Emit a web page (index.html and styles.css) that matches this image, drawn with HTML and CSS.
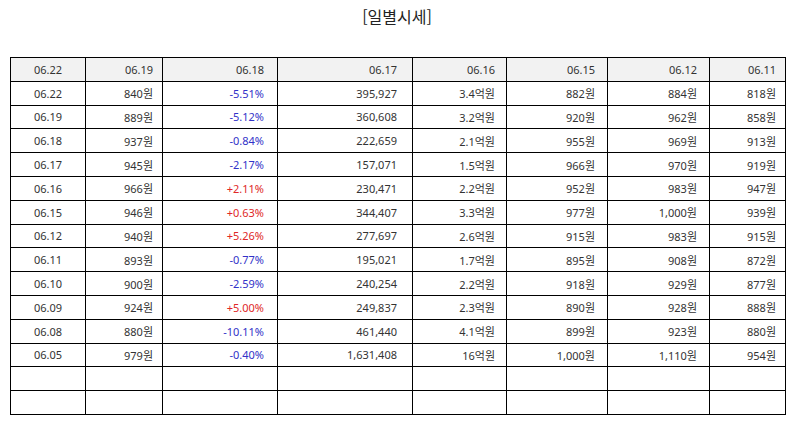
FILE: index.html
```html
<!DOCTYPE html>
<html lang="ko">
<head>
<meta charset="utf-8">
<title>일별시세</title>
<link rel="stylesheet" href="styles.css">
</head>
<body>
<div class="title">[일별시세]</div>
<table class="daily">
<colgroup>
<col class="c1"><col class="c2"><col class="c3"><col class="c4"><col class="c5"><col class="c6"><col class="c7"><col class="c8">
</colgroup>
<thead>
<tr><th>06.22</th><th>06.19</th><th>06.18</th><th>06.17</th><th>06.16</th><th>06.15</th><th>06.12</th><th>06.11</th></tr>
</thead>
<tbody>
<tr><td>06.22</td><td>840원</td><td class="dn">-5.51%</td><td>395,927</td><td>3.4억원</td><td>882원</td><td>884원</td><td>818원</td></tr>
<tr><td>06.19</td><td>889원</td><td class="dn">-5.12%</td><td>360,608</td><td>3.2억원</td><td>920원</td><td>962원</td><td>858원</td></tr>
<tr><td>06.18</td><td>937원</td><td class="dn">-0.84%</td><td>222,659</td><td>2.1억원</td><td>955원</td><td>969원</td><td>913원</td></tr>
<tr><td>06.17</td><td>945원</td><td class="dn">-2.17%</td><td>157,071</td><td>1.5억원</td><td>966원</td><td>970원</td><td>919원</td></tr>
<tr><td>06.16</td><td>966원</td><td class="up">+2.11%</td><td>230,471</td><td>2.2억원</td><td>952원</td><td>983원</td><td>947원</td></tr>
<tr><td>06.15</td><td>946원</td><td class="up">+0.63%</td><td>344,407</td><td>3.3억원</td><td>977원</td><td>1,000원</td><td>939원</td></tr>
<tr><td>06.12</td><td>940원</td><td class="up">+5.26%</td><td>277,697</td><td>2.6억원</td><td>915원</td><td>983원</td><td>915원</td></tr>
<tr><td>06.11</td><td>893원</td><td class="dn">-0.77%</td><td>195,021</td><td>1.7억원</td><td>895원</td><td>908원</td><td>872원</td></tr>
<tr><td>06.10</td><td>900원</td><td class="dn">-2.59%</td><td>240,254</td><td>2.2억원</td><td>918원</td><td>929원</td><td>877원</td></tr>
<tr><td>06.09</td><td>924원</td><td class="up">+5.00%</td><td>249,837</td><td>2.3억원</td><td>890원</td><td>928원</td><td>888원</td></tr>
<tr><td>06.08</td><td>880원</td><td class="dn">-10.11%</td><td>461,440</td><td>4.1억원</td><td>899원</td><td>923원</td><td>880원</td></tr>
<tr><td>06.05</td><td>979원</td><td class="dn">-0.40%</td><td>1,631,408</td><td>16억원</td><td>1,000원</td><td>1,110원</td><td>954원</td></tr>
<tr><td></td><td></td><td></td><td></td><td></td><td></td><td></td><td></td></tr>
<tr><td></td><td></td><td></td><td></td><td></td><td></td><td></td><td></td></tr>
</tbody>
</table>
</body>
</html>
```
FILE: styles.css
```css
html, body {
  margin: 0;
  padding: 0;
  background: #fff;
}
body {
  font-family: "Noto Sans", "Noto Sans CJK KR", sans-serif;
  color: #333;
}
.title {
  height: 57px;
  padding-top: 4px;
  box-sizing: border-box;
  text-align: center;
  font-family: "Noto Sans CJK KR", sans-serif;
  font-size: 16px;
  line-height: 24px;
  color: #222;
}
.daily {
  margin-left: 10px;
  border-collapse: collapse;
  table-layout: fixed;
  width: 776px;
  font-size: 11px;
}
.daily .c1 { width: 75px; }
.daily .c2 { width: 77px; }
.daily .c3 { width: 115px; }
.daily .c4 { width: 135px; }
.daily .c5 { width: 94px; }
.daily .c6 { width: 101px; }
.daily .c7 { width: 102px; }
.daily .c8 { width: 76px; }
.daily th,
.daily td {
  border: 1px solid #000;
  height: 22.8px;
  padding: 0;
  text-align: right;
  font-weight: normal;
  vertical-align: middle;
  white-space: nowrap;
}
.daily th {
  background: #f2f2f2;
}
.daily tr > :nth-child(1) { text-align: center; }
.daily tr > :nth-child(2) { padding-right: 9px; }
.daily tr > :nth-child(3) { padding-right: 13px; }
.daily tr > :nth-child(4) { padding-right: 15px; }
.daily tr > :nth-child(5) { padding-right: 11px; }
.daily tr > :nth-child(6) { padding-right: 12px; }
.daily tr > :nth-child(7) { padding-right: 12px; }
.daily tr > :nth-child(8) { padding-right: 9px; }
.daily .dn { color: #3232c8; }
.daily .up { color: #e02828; }
```
